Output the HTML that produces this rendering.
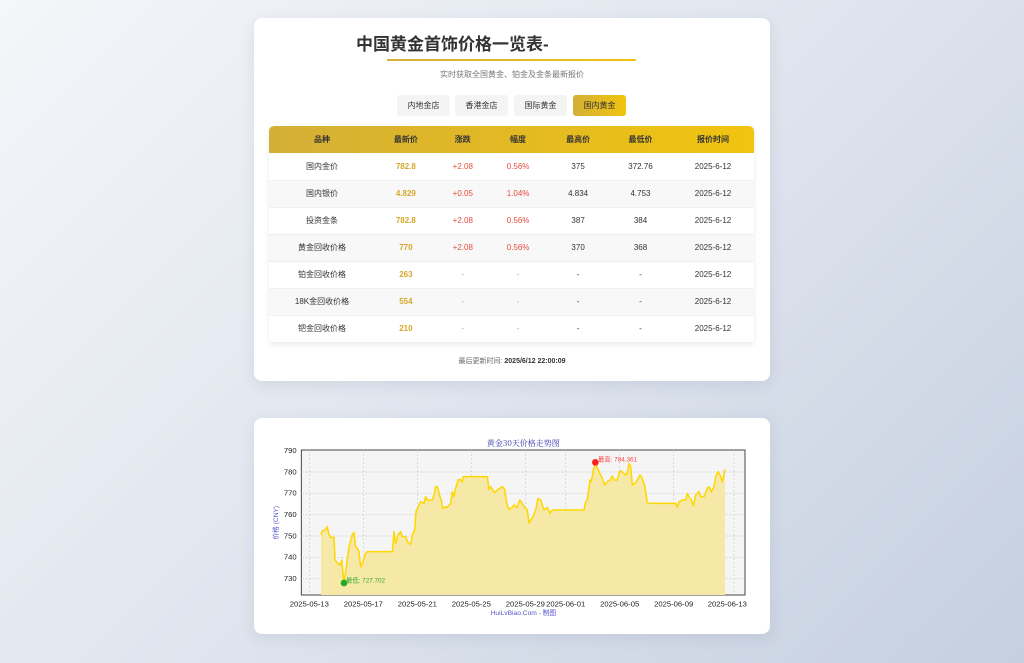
<!DOCTYPE html>
<html><head><meta charset="utf-8"><style>
*{margin:0;padding:0;box-sizing:border-box}
body{width:1024px;height:663px;overflow:hidden;background:linear-gradient(135deg,#f4f6f9 0%,#dde3ed 55%,#c5cfe0 100%);font-family:"Liberation Sans","Noto Sans CJK SC",sans-serif;position:relative}
.card{position:absolute;left:254px;width:516px;background:#fff;border-radius:8px;box-shadow:0 4px 14px rgba(80,90,120,.12)}
.t{position:absolute;left:102px;top:15px;font-size:17px;font-weight:bold;color:#333;line-height:24px}
.ul{position:absolute;left:133px;top:41px;width:249px;height:2px;background:linear-gradient(90deg,#d4af37,#f1c40f)}
.sub{position:absolute;left:0;width:516px;top:51px;text-align:center;font-size:8px;color:#777}
.tab{position:absolute;top:77px;height:21px;width:53px;font-size:8px;line-height:21px;text-align:center;background:#f4f4f4;color:#333;border-radius:3px}
.tab.a{background:linear-gradient(90deg,#d4af37,#f1c40f)}
table{position:absolute;left:15px;top:108px;width:485px;border-collapse:collapse;font-size:8px;box-shadow:0 2px 6px rgba(0,0,0,.08);border-radius:5px;overflow:hidden}
th{background:linear-gradient(90deg,#d4af37 269px,#f1c40f 754px) fixed;height:27px;font-weight:bold;color:#333}
td{height:27px;text-align:center;color:#333;border-bottom:1px solid #f0f0f0}
tr:nth-child(odd) td{background:#f8f8f8}
.g{color:#d4a72c;font-weight:bold}.r{color:#e74c3c}.d{color:#aaa}
.ft{position:absolute;left:0;width:516px;top:338px;text-align:center;font-size:7px;color:#666}
</style></head><body>
<div class="card" style="top:18px;height:363px">
<div class="t">中国黄金首饰价格一览表-</div><div class="ul"></div>
<div class="sub">实时获取全国黄金、铂金及金条最新报价</div>
<div class="tab" style="left:143px">内地金店</div><div class="tab" style="left:201px">香港金店</div><div class="tab" style="left:260px">国际黄金</div><div class="tab a" style="left:319px">国内黄金</div>
<table>
<tr><th style="width:106px">品种</th><th>最新价</th><th>涨跌</th><th>幅度</th><th>最高价</th><th>最低价</th><th style="width:82px">报价时间</th></tr>
<tr><td>国内金价</td><td class="g">782.8</td><td class="r">+2.08</td><td class="r">0.56%</td><td>375</td><td>372.76</td><td>2025-6-12</td></tr>
<tr><td>国内银价</td><td class="g">4.829</td><td class="r">+0.05</td><td class="r">1.04%</td><td>4.834</td><td>4.753</td><td>2025-6-12</td></tr>
<tr><td>投资金条</td><td class="g">782.8</td><td class="r">+2.08</td><td class="r">0.56%</td><td>387</td><td>384</td><td>2025-6-12</td></tr>
<tr><td>黄金回收价格</td><td class="g">770</td><td class="r">+2.08</td><td class="r">0.56%</td><td>370</td><td>368</td><td>2025-6-12</td></tr>
<tr><td>铂金回收价格</td><td class="g">263</td><td class="d">-</td><td class="d">-</td><td>-</td><td>-</td><td>2025-6-12</td></tr>
<tr><td>18K金回收价格</td><td class="g">554</td><td class="d">-</td><td class="d">-</td><td>-</td><td>-</td><td>2025-6-12</td></tr>
<tr><td>钯金回收价格</td><td class="g">210</td><td class="d">-</td><td class="d">-</td><td>-</td><td>-</td><td>2025-6-12</td></tr>
</table>
<div class="ft">最后更新时间: <b style="color:#333">2025/6/12 22:00:09</b></div>
</div>
<div class="card" style="top:418px;height:216px"></div>
<svg style="position:absolute;left:254px;top:420px" width="516" height="210" viewBox="0 0 1548 630" font-family="Liberation Sans,Noto Sans CJK SC,sans-serif">
<rect x="142" y="90" width="1331" height="435" fill="#f5f5f5" stroke="#444" stroke-width="3"/>
<g stroke="#ccc" stroke-width="2" stroke-dasharray="6,6">
<path d="M166 90V525M328 90V525M490 90V525M652 90V525M814 90V525M935 90V525M1097 90V525M1259 90V525M1440 90V525"/>
<path d="M142 156H1473M142 220H1473M142 284H1473M142 348H1473M142 412H1473M142 476H1473"/>
</g>
<polygon fill="#f6e8a6" points="201,525 201,345 205,333 215,328 220,320 225,345 230,352 240,352 243,420 250,428 258,435 263,420 270,488 275,455 285,380 295,345 300,337 305,380 310,385 315,395 320,440 325,430 335,400 340,395 415,395 420,335 425,370 432,345 440,335 445,350 455,350 462,368 470,373 475,345 482,330 486,275 495,255 500,245 510,250 515,230 520,240 535,240 540,225 545,200 550,200 558,230 562,240 566,265 575,260 580,262 590,250 595,215 600,230 605,205 612,180 618,178 625,185 628,170 700,170 705,208 710,200 715,208 722,218 730,210 745,200 752,208 758,250 765,268 775,262 780,255 790,262 797,240 805,250 812,262 820,270 825,310 830,300 835,295 845,270 852,235 860,240 870,270 880,262 888,280 895,270 905,270 990,270 995,245 1000,240 1008,180 1012,185 1018,150 1025,125 1030,145 1040,165 1045,175 1052,195 1060,185 1068,180 1075,168 1080,180 1090,180 1095,160 1100,152 1110,160 1115,165 1120,160 1125,130 1130,140 1135,195 1145,188 1150,180 1158,165 1165,175 1172,195 1180,248 1188,250 1265,250 1270,262 1275,245 1285,240 1295,240 1300,220 1305,230 1312,240 1318,258 1325,225 1335,215 1340,230 1350,230 1360,205 1365,200 1372,215 1380,200 1385,170 1392,155 1398,165 1405,185 1413,148 1413,525"/>
<polyline fill="none" stroke="#ffd700" stroke-width="4.5" stroke-linejoin="round" points="201,345 205,333 215,328 220,320 225,345 230,352 240,352 243,420 250,428 258,435 263,420 270,488 275,455 285,380 295,345 300,337 305,380 310,385 315,395 320,440 325,430 335,400 340,395 415,395 420,335 425,370 432,345 440,335 445,350 455,350 462,368 470,373 475,345 482,330 486,275 495,255 500,245 510,250 515,230 520,240 535,240 540,225 545,200 550,200 558,230 562,240 566,265 575,260 580,262 590,250 595,215 600,230 605,205 612,180 618,178 625,185 628,170 700,170 705,208 710,200 715,208 722,218 730,210 745,200 752,208 758,250 765,268 775,262 780,255 790,262 797,240 805,250 812,262 820,270 825,310 830,300 835,295 845,270 852,235 860,240 870,270 880,262 888,280 895,270 905,270 990,270 995,245 1000,240 1008,180 1012,185 1018,150 1025,125 1030,145 1040,165 1045,175 1052,195 1060,185 1068,180 1075,168 1080,180 1090,180 1095,160 1100,152 1110,160 1115,165 1120,160 1125,130 1130,140 1135,195 1145,188 1150,180 1158,165 1165,175 1172,195 1180,248 1188,250 1265,250 1270,262 1275,245 1285,240 1295,240 1300,220 1305,230 1312,240 1318,258 1325,225 1335,215 1340,230 1350,230 1360,205 1365,200 1372,215 1380,200 1385,170 1392,155 1398,165 1405,185 1413,148"/>
<circle cx="1024" cy="127" r="10" fill="#f22"/><circle cx="270" cy="489" r="10" fill="#2a2"/>
<text x="1032" y="125" font-size="19" fill="#f44">最高: 784.361</text>
<text x="276" y="488" font-size="19" fill="#3a3">最低: 727.702</text>
<text x="808" y="78" font-size="24" fill="#33a" text-anchor="middle" font-family="Noto Serif CJK SC,serif">黄金30天价格走势图</text>
<g font-size="23" fill="#222" text-anchor="end">
<text x="128" y="99">790</text><text x="128" y="163">780</text><text x="128" y="227">770</text><text x="128" y="291">760</text><text x="128" y="355">750</text><text x="128" y="419">740</text><text x="128" y="483">730</text></g>
<g font-size="23" fill="#222" text-anchor="middle">
<text x="166" y="560">2025-05-13</text><text x="328" y="560">2025-05-17</text><text x="490" y="560">2025-05-21</text><text x="652" y="560">2025-05-25</text><text x="814" y="560">2025-05-29</text><text x="935" y="560">2025-06-01</text><text x="1097" y="560">2025-06-05</text><text x="1259" y="560">2025-06-09</text><text x="1420" y="560">2025-06-13</text></g>
<text x="808" y="585" font-size="20" fill="#55c" text-anchor="middle">HuiLvBiao.Com - 制图</text>
<text transform="translate(72,308) rotate(-90)" font-size="20" fill="#55c" text-anchor="middle">价格 (CNY)</text>
</svg>
</body></html>
